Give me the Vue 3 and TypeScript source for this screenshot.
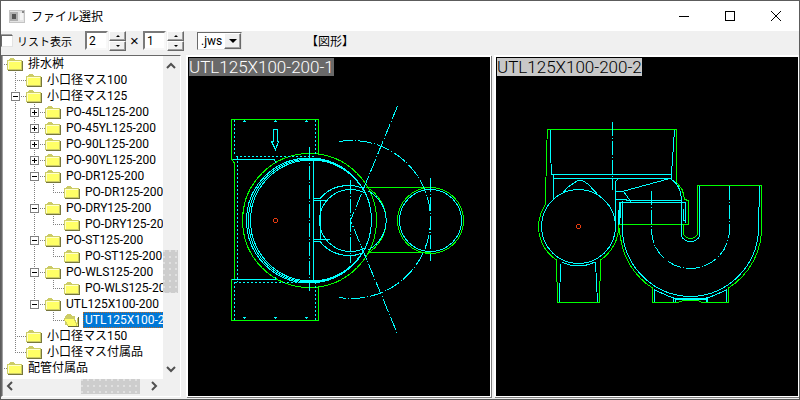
<script setup lang="ts">
import { computed, ref } from 'vue'

interface Node {
  name: string
  // one letter per indent cell: v = vertical, t = tee, l = elbow, n = blank
  guides: string
  state?: 'open' | 'closed'
}

const nodes = ref<Node[]>([
  { name: '排水桝', guides: '' },
  { name: '小口径マス100', guides: 't' },
  { name: '小口径マス125', guides: 't', state: 'open' },
  { name: 'PO-45L125-200', guides: 'vt', state: 'closed' },
  { name: 'PO-45YL125-200', guides: 'vt', state: 'closed' },
  { name: 'PO-90L125-200', guides: 'vt', state: 'closed' },
  { name: 'PO-90YL125-200', guides: 'vt', state: 'closed' },
  { name: 'PO-DR125-200', guides: 'vt', state: 'open' },
  { name: 'PO-DR125-200', guides: 'vvl' },
  { name: 'PO-DRY125-200', guides: 'vt', state: 'open' },
  { name: 'PO-DRY125-200', guides: 'vvl' },
  { name: 'PO-ST125-200', guides: 'vt', state: 'open' },
  { name: 'PO-ST125-200', guides: 'vvl' },
  { name: 'PO-WLS125-200', guides: 'vt', state: 'open' },
  { name: 'PO-WLS125-200', guides: 'vvl' },
  { name: 'UTL125X100-200', guides: 'vl', state: 'open' },
  { name: 'UTL125X100-2', guides: 'vnl' },
  { name: '小口径マス150', guides: 't' },
  { name: '小口径マス付属品', guides: 'l' },
  { name: '配管付属品', guides: '' },
])
const selected = ref(16)
const columns = ref(2)
const rows = ref(1)

const visible = computed(() => {
  let hideBelow = Infinity
  return nodes.value
    .map((node, id) => ({ node, id }))
    .filter(({ node }) => {
      const depth = node.guides.length
      if (depth > hideBelow) return false
      hideBelow = node.state === 'closed' ? depth : Infinity
      return true
    })
})

function toggle(node: Node) {
  node.state = node.state === 'open' ? 'closed' : 'open'
}
function step(which: 'columns' | 'rows', by: number) {
  const target = which === 'columns' ? columns : rows
  target.value = Math.max(1, Number(target.value) + by)
}
</script>

<template>
  <div class="window">
    <header class="titlebar">
      <svg class="app-icon" width="16" height="13" viewBox="0 0 16 13" aria-hidden="true">
        <rect x="0.5" y="0.5" width="15" height="12" fill="#e4e4e4" stroke="#c4c4c4" />
        <rect x="1" y="2" width="8" height="9" fill="#b0b0b0" />
        <rect x="3" y="4" width="4" height="5" fill="#555" />
        <rect x="11" y="3" width="3" height="7" fill="#f4f4f4" />
        <rect x="13" y="1" width="2" height="2" fill="#888" />
      </svg>
      <h1>ファイル選択</h1>
      <div class="caption-buttons">
        <button type="button" aria-label="最小化">
          <svg width="12" height="12" viewBox="0 0 12 12"><path d="M1 6.500h10" /></svg>
        </button>
        <button type="button" aria-label="最大化">
          <svg width="12" height="12" viewBox="0 0 12 12"><path d="M1.500 1.500h9v9h-9z" /></svg>
        </button>
        <button type="button" aria-label="閉じる">
          <svg class="smooth" width="12" height="12" viewBox="0 0 12 12"><path d="M1 1l10 10M11 1L1 11" /></svg>
        </button>
      </div>
    </header>

    <div class="toolbar">
      <label class="check"><input type="checkbox" /><span>リスト表示</span></label>
      <div class="spin first">
        <input v-model="columns" type="text" aria-label="列数" />
        <div class="arrows">
          <button type="button" aria-label="列を増やす" @click="step('columns', 1)"><i class="up"></i></button>
          <button type="button" aria-label="列を減らす" @click="step('columns', -1)"><i class="down"></i></button>
        </div>
      </div>
      <span class="times">×</span>
      <div class="spin">
        <input v-model="rows" type="text" aria-label="行数" />
        <div class="arrows">
          <button type="button" aria-label="行を増やす" @click="step('rows', 1)"><i class="up"></i></button>
          <button type="button" aria-label="行を減らす" @click="step('rows', -1)"><i class="down"></i></button>
        </div>
      </div>
      <div class="combo">
        <select aria-label="拡張子"><option>.jws</option></select>
        <span class="drop"><i class="down big"></i></span>
      </div>
      <span class="kind">【図形】</span>
    </div>

    <main class="body">
      <nav class="tree-panel">
        <div class="tree-box">
          <ul class="tree">
            <li v-for="{ node, id } in visible" :key="id" :class="{ root: !node.guides }">
              <span v-for="(g, n) in node.guides" :key="n" class="cell">
                <svg width="19" height="16" viewBox="0 0 19 16" aria-hidden="true">
                  <path v-if="g === 'v' || g === 't'" d="M8.500 0v16" />
                  <path v-if="g === 'l'" d="M8.500 0v8" />
                  <path v-if="g === 't' || g === 'l'" d="M8 8.500h11" />
                </svg>
                <button
                  v-if="node.state && n === node.guides.length - 1"
                  type="button"
                  class="toggle"
                  :aria-label="node.name"
                  @click="toggle(node)"
                >
                  <svg width="9" height="9" viewBox="0 0 9 9">
                    <rect x="0.5" y="0.5" width="8" height="8" fill="#fff" stroke="#808080" />
                    <path d="M2 4.500h5" stroke="#000" />
                    <path v-if="node.state === 'closed'" d="M4.500 2v5" stroke="#000" />
                  </svg>
                </button>
              </span>
              <svg class="folder" width="16" height="14" viewBox="0 0 16 14" aria-hidden="true">
                <template v-if="id === selected">
                  <path d="M1 12V3h1V2h1V1h4v1h1v1h6v9z" fill="#cccc66" />
                  <path d="M11 3h3v2h-1v5h-2z" fill="#fff" />
                  <path d="M0 5h10l1 1 3 6v1H4z" fill="#ffff66" />
                  <path d="M0 5.500h10l1 2 2 5M0 6l4 7" fill="none" stroke="#cccc66" />
                  <path d="M4 13.500h11M14.500 4v10" stroke="#666633" />
                </template>
                <template v-else>
                  <path d="M1 3h1V2h1V1h4v1h1v1h6v2H0V4h1z" fill="#cccc66" />
                  <path d="M0 3h15v10H0z" fill="#cccc66" />
                  <path d="M1 4h13v8H1z" fill="#ffff66" />
                  <path d="M1 4.500h13M1.500 4v8" stroke="#ffffcc" />
                  <path d="M1 13.500h15M15.500 4v10" stroke="#77773d" />
                </template>
              </svg>
              <button
                type="button"
                class="name"
                :class="{ selected: id === selected }"
                @click="selected = id"
              >{{ node.name }}</button>
            </li>
          </ul>
          <div class="vscroll">
            <svg width="15" height="17" viewBox="0 0 15 17"><path d="M4 12l4-4 4 4" /></svg>
            <div class="space above"></div>
            <div class="thumb"></div>
            <div class="space below"></div>
            <svg width="15" height="17" viewBox="0 0 15 17"><path d="M4 5l4 4 4-4" /></svg>
          </div>
          <div class="hscroll">
            <svg width="17" height="15" viewBox="0 0 17 15"><path d="M10 3L6 7l4 4" /></svg>
            <div class="space before"></div>
            <div class="thumb"></div>
            <div class="space after"></div>
            <svg width="17" height="15" viewBox="0 0 17 15"><path d="M6 3l4 4-4 4" /></svg>
          </div>
        </div>
      </nav>

      <section class="pane">
        <svg class="drawing" viewBox="188 57 302 339" role="img" aria-label="平面図">
          <g class="green">
            <path d="M318.500 154V119.500H231.500V159l3 4V279.500H231.500V320.500H318.500V286" />
            <circle cx="309.5" cy="220.5" r="67" />
            <path d="M430.500 187.500H367A38 38 0 0 1 367 253.500L370 252.500H430.500" />
            <circle cx="430.500" cy="220.5" r="33" />
          </g>
          <g class="cyan">
            <circle cx="309" cy="220.5" r="62.5" />
            <circle cx="310" cy="220.5" r="61.5" />
            <circle cx="311" cy="220.5" r="60.5" />
            <path d="M233 159.500H274l2 3M232 279.500H275l1-2" />
            <path d="M313.500 159V282" />
            <path d="M273.500 129.500h4v12h1l-3 8-4-8h2z" />
            <path d="M243 121.500h3M274 121.500h3M305 121.500h3M243 317.500h3M274 317.500h3M305 317.500h3" />
            <path d="M244.500 120v2M275.500 120v2M306.500 120v2M244.500 317v2M275.500 317v2M306.500 317v2" />
            <path d="M313 198.500h7A38 38 0 0 1 350 185.500Q357 185.500 362 188M313 200.500h15M313 239.500h17M313 241.500h7A38 38 0 0 0 350 255.500Q357 255.500 362 253" />
            <path d="M320.500 200V240" />
            <path d="M365 193A31 31 0 0 0 350.500 189.500A31 31 0 0 0 350.500 251.500A31 31 0 0 0 365 248" />
            <path d="M368 191A33 33 0 0 1 368 250" />
            <circle cx="430.500" cy="220.5" r="31" />
          </g>
          <g class="cyan dashed">
            <path d="M234.500 120V156M315.500 120V154M236 156.500H314M237.500 157V282M235 282.500H316M234.500 282V320M315.500 282V320" />
          </g>
          <g class="cyan chain">
            <path d="M309.500 147V291" />
            <path d="M350.500 180V263" />
            <path d="M430.500 178V261" />
            <path d="M397.500 106L350.500 220.500L397.500 334" />
            <path d="M339 141.500A79 79 0 1 1 339 297.500" />
          </g>
          <circle class="red" cx="275.500" cy="220.500" r="2" />
        </svg>
        <h2 class="dark">UTL125X100-200-1</h2>
      </section>

      <section class="pane">
        <svg class="drawing" viewBox="496 57 302 339" role="img" aria-label="側面図">
          <g class="green">
            <path d="M545.500 204L546.500 150L547.500 129.500H676.500V182L682.500 190L684.500 199.500L688.500 200.500V224.500H618" />
            <path d="M545.500 204L541 213A40 40 0 0 0 556.500 260L557.500 302.500H599.500L600.500 260A40 40 0 0 0 618.500 224" />
            <path d="M618.500 224L620.500 238A71 71 0 0 0 652.500 288V302.500H678L683 300.500H698L702 302.500H728.500V288A71 71 0 0 0 761.500 228V185.500H697.500V234Q695 238.500 690.500 238.500Q686 238.500 683.500 234V225" />
          </g>
          <g class="cyan">
            <circle cx="578.500" cy="226.500" r="37" />
            <path d="M550.500 130V152L551.500 174.500H671.500V178.500H553.500M553.500 174V200" />
            <path d="M674.500 130L671.500 174" />
            <path d="M562 194L568 187L577 181L580 180L583 181L588 184L601 198" />
            <path d="M562 262Q578 270 595 262M560.500 264L559.500 302M595.500 262L597.500 302" />
            <path d="M620 178.500Q615.500 179 615.500 184V226" />
            <path d="M616 191.500L624 191L670 178.500Q681.500 185 681.500 202V236Q684 241.500 690.500 241.500Q697 241.500 699.500 236V186" />
            <path d="M624 192L631 202M616 199.500H626V200.500H682" />
            <path d="M619.500 224V202.500H685.500V223" />
            <path d="M618.500 210V225M620.500 203V218M683.500 209V220H686" />
            <path d="M622.500 201V232A69 69 0 0 0 690.500 296.500A69 69 0 0 0 758.500 228L759.500 186" />
            <path d="M654.500 302V290L673 298L691 298.500L708 298L726.500 290V302" />
            <path d="M673.500 297V302M675.500 299V302M706.500 297V302M707.500 297V302M676 299.500H706" />
          </g>
          <g class="cyan chain">
            <path d="M612.500 122V190" />
            <path d="M651.500 191V229.500A39 39 0 0 0 729.500 229.500V186" />
          </g>
          <circle class="red" cx="578.500" cy="226.500" r="2" />
        </svg>
        <h2 class="light">UTL125X100-200-2</h2>
      </section>
    </main>
  </div>
</template>

<style>
body {
  margin: 0;
}
</style>

<style scoped>
* {
  box-sizing: border-box;
}
.window {
  display: flex;
  flex-direction: column;
  height: 100vh;
  border: 1px solid #5c5c5c;
  background: #f0f0f0;
  color: #000;
  font: 12px/16px Roboto, "Noto Sans CJK JP", sans-serif;
  overflow: hidden;
}
button {
  font: inherit;
  color: inherit;
  padding: 0;
  border: 0;
  background: none;
}
.titlebar {
  display: flex;
  align-items: center;
  flex: none;
  height: 30px;
  padding-left: 8px;
  gap: 6px;
  background: #fff;
}
h1 {
  margin: 0;
  font: 12px/20px "Noto Sans CJK JP", sans-serif;
}
.caption-buttons {
  display: flex;
  margin-left: auto;
  height: 100%;
}
.caption-buttons button {
  display: flex;
  align-items: center;
  justify-content: center;
  width: 46px;
}
.caption-buttons path {
  fill: none;
  stroke: #000;
  shape-rendering: crispEdges;
}
.caption-buttons .smooth path {
  shape-rendering: auto;
}
.toolbar {
  display: flex;
  align-items: center;
  flex: none;
  height: 24px;
  padding-bottom: 4px;
}
.check {
  display: flex;
  align-items: center;
  gap: 4px;
  width: 84px;
  height: 16px;
}
.check span {
  font: 11px/16px "Noto Sans CJK JP", sans-serif;
}
.check input {
  appearance: none;
  width: 12px;
  height: 12px;
  margin: 0;
  background: #fff;
  border: 1px solid;
  border-color: #696969 #e3e3e3 #e3e3e3 #696969;
  box-shadow: -1px -1px #a0a0a0;
}
.check input:checked {
  background: #0078d7;
}
.spin {
  display: flex;
  gap: 1px;
  height: 20px;
}
.spin input {
  width: 23px;
  height: 19px;
  padding: 0 2px;
  border: 2px solid;
  border-color: #7a7a7a #f8f8f8 #f8f8f8 #7a7a7a;
  background: #fff;
  font: 12px/15px Roboto, sans-serif;
  outline: 0;
}
.arrows {
  display: flex;
  flex-direction: column;
  width: 17px;
}
.arrows button {
  display: flex;
  align-items: center;
  justify-content: center;
  flex: 1;
}
.arrows button,
.drop {
  background: #f0f0f0;
  border: 1px solid;
  border-color: #fff #696969 #696969 #fff;
  box-shadow: inset -1px -1px #a0a0a0;
}
.up,
.down {
  border: 2px solid transparent;
}
.up {
  border-top: 0;
  border-bottom-color: #000;
}
.down {
  border-bottom: 0;
  border-top-color: #000;
}
.big {
  border-width: 4px 4px 0;
}
.times {
  width: 17px;
  text-align: center;
  font: 15px/16px "Liberation Sans", sans-serif;
}
.combo {
  display: flex;
  position: relative;
  width: 45px;
  height: 18px;
  margin-left: 13px;
  border: 1px solid;
  border-color: #696969 #e3e3e3 #e3e3e3 #696969;
  background: #fff;
}
.combo select {
  appearance: none;
  width: 100%;
  padding: 0 3px;
  border: 0;
  background: #fff;
  font: 12px/15px Roboto, sans-serif;
  outline: 0;
}
.drop {
  position: absolute;
  top: 0;
  right: 0;
  bottom: 0;
  display: flex;
  align-items: center;
  justify-content: center;
  width: 17px;
  pointer-events: none;
}
.kind {
  margin-left: 64px;
  font: 12px/16px "Noto Sans CJK JP", sans-serif;
}
.body {
  display: flex;
  flex: 1;
  min-height: 0;
  padding-bottom: 2px;
}
.tree-panel {
  flex: none;
  width: 185px;
  padding-right: 5px;
}
.tree-box {
  display: grid;
  grid-template: minmax(0, 1fr) 17px / minmax(0, 1fr) 15px;
  height: 100%;
  padding-right: 2px;
  border: 1px solid;
  border-color: #696969 #fff #fff #696969;
  box-shadow: inset 1px 0 #a0a0a0;
  background: #f0f0f0;
}
.tree {
  margin: 0 0 0 1px;
  padding: 0 0 0 4px;
  overflow: hidden;
  background: #fff;
  list-style: none;
}
.tree li {
  display: flex;
  position: relative;
  height: 16px;
  white-space: nowrap;
}
.root::before {
  content: "";
  position: absolute;
  top: 8px;
  left: -3px;
  width: 3px;
  border-top: 1px dotted #808080;
}
.cell {
  display: flex;
  position: relative;
  flex: none;
  width: 19px;
}
.cell > svg path {
  stroke: #808080;
  stroke-dasharray: 1 1;
}
.toggle {
  display: flex;
  position: absolute;
  top: 4px;
  left: 4px;
}
.folder {
  flex: none;
  margin: 1px 3px 0 0;
  shape-rendering: crispEdges;
}
.name {
  flex: none;
  height: 16px;
  padding: 0 2px;
  line-height: 14px;
  font-size: 12px;
}
.name.selected {
  background: #0078d7;
  color: #fff;
  outline: 1px dotted #c06820;
  outline-offset: -1px;
}
.vscroll,
.hscroll {
  display: flex;
}
.vscroll {
  flex-direction: column;
}
.vscroll svg,
.hscroll svg {
  flex: none;
}
.vscroll path,
.hscroll path {
  fill: none;
  stroke: #505050;
  stroke-width: 2;
}
.thumb {
  background: radial-gradient(circle at 1px 1px, #e0e0e0 1px, transparent 1px) 0 0 / 6px 6px #cdcdcd;
}
.vscroll .thumb {
  flex: 43;
}
.above {
  flex: 178;
}
.below {
  flex: 69;
}
.hscroll .thumb {
  flex: 59;
  margin-bottom: 2px;
}
.before {
  flex: 62;
}
.after {
  flex: 6;
}
.pane {
  position: relative;
  flex: 1;
  min-width: 0;
  margin-right: 2px;
  border: 2px solid #fff;
  border-width: 2px 1px 1px 2px;
  box-shadow: 1px 1px #808080;
  background: #000;
}
.pane + .pane {
  margin: 0 0 0 1px;
}
.drawing {
  display: block;
  width: 100%;
  height: 100%;
}
.drawing * {
  shape-rendering: crispEdges;
  fill: none;
}
.green {
  stroke: #00ff00;
}
.cyan {
  stroke: #00ffff;
}
.red {
  stroke: #e83c10;
}
.dashed {
  stroke-dasharray: 2 2;
}
.chain {
  stroke-dasharray: 14 2 1 2;
}
.pane h2 {
  position: absolute;
  top: 1px;
  left: 1px;
  height: 18px;
  margin: 0;
  font: 300 17px/18px Roboto, sans-serif;
  white-space: nowrap;
}
.dark {
  background: #696969;
  color: #fff;
}
.light {
  background: #c8c8c8;
  color: #000;
}
</style>
